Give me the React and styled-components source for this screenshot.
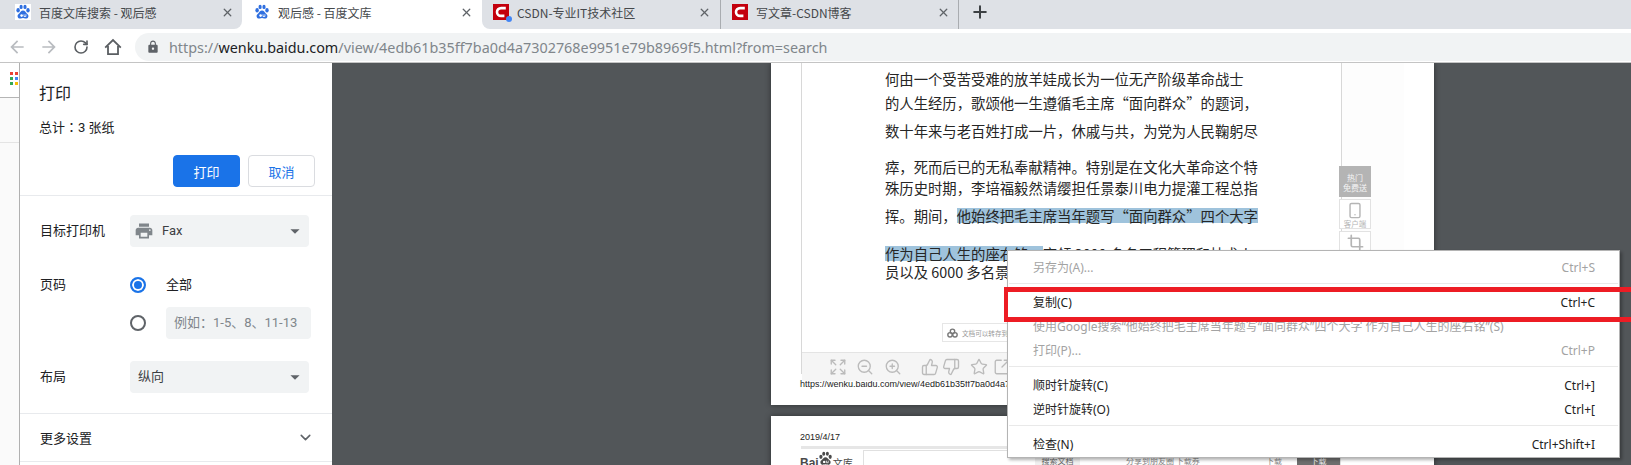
import styled, { createGlobalStyle } from "styled-components"
import { ChevronDown, Crop, Expand, Plus, RotateCw, Smartphone, SquareArrowOutUpRight, Star, ThumbsDown, ThumbsUp, X, ZoomIn, ZoomOut } from "lucide-react"
import { MdArrowBack, MdArrowForward, MdArrowDropDown, MdLock, MdPrint } from "react-icons/md"

const SANS = `Roboto, "Noto Sans CJK SC", sans-serif`
const UI = `"Noto Sans", "Noto Sans CJK SC", sans-serif`
const DOC = `"Noto Sans CJK SC", sans-serif`

const GlobalStyle = createGlobalStyle`
  html, body { margin: 0; padding: 0; background: #fff; }
  * { box-sizing: border-box; }
`

const tabs = [
  { title: "百度文库搜索 - 观后感", icon: "baidu", width: 242, pad: 15, closePad: 8, tile: true },
  { title: "观后感 - 百度文库", icon: "baidu", width: 240, pad: 12, closePad: 9, active: true },
  { title: "CSDN-专业IT技术社区", icon: "csdn", width: 239, pad: 11, closePad: 9, dot: true, divider: true },
  { title: "写文章-CSDN博客", icon: "csdn", width: 238, pad: 11, closePad: 8, divider: true },
]

const lines = [
  { top: 7, text: "何由一个受苦受难的放羊娃成长为一位无产阶级革命战士" },
  { top: 6, text: "的人生经历，歌颂他一生遵循毛主席“面向群众”的题词，" },
  { top: 10, text: "数十年来与老百姓打成一片，休戚与共，为党为人民鞠躬尽" },
  { top: 18, text: "瘁，死而后已的无私奉献精神。特别是在文化大革命这个特" },
  { top: 3, text: "殊历史时期，李培福毅然请缨担任景泰川电力提灌工程总指" },
  { top: 10, text: "挥。期间，", marked: "他始终把毛主席当年题写“面向群众”四个大字" },
  { top: 20, marked: "作为自己人生的座右铭，", text: "率领 3000 多名工程管理和技术人" },
  { top: 0, text: "员以及 6000 多名景泰川工程建设者" },
]

const pageTools = [
  { Icon: Expand, gap: 27 },
  { Icon: ZoomOut, gap: 9 },
  { Icon: ZoomIn, gap: 10 },
  { Icon: ThumbsUp, gap: 19 },
  { Icon: ThumbsDown, gap: 3 },
  { Icon: Star, gap: 10 },
  { Icon: SquareArrowOutUpRight, gap: 5 },
]

const menu = [
  [{ label: "另存为(A)...", keys: "Ctrl+S", off: true }],
  [
    { label: "复制(C)", keys: "Ctrl+C" },
    { label: "使用Google搜索“他始终把毛主席当年题写“面向群众”四个大字 作为自己人生的座右铭”(S)", off: true },
    { label: "打印(P)...", keys: "Ctrl+P", off: true },
  ],
  [
    { label: "顺时针旋转(C)", keys: "Ctrl+]" },
    { label: "逆时针旋转(O)", keys: "Ctrl+[" },
  ],
  [{ label: "检查(N)", keys: "Ctrl+Shift+I" }],
]

const BaiduPaw = ({ size = 16, color = "#2f6fe0" }) => (
  <svg width={size} height={size} viewBox="0 0 16 16">
    <ellipse cx="3.1" cy="6.2" rx="1.7" ry="2.2" fill={color} />
    <ellipse cx="6.1" cy="2.9" rx="1.6" ry="2.2" fill={color} />
    <ellipse cx="10" cy="2.9" rx="1.6" ry="2.2" fill={color} />
    <ellipse cx="13" cy="6.2" rx="1.7" ry="2.2" fill={color} />
    <path d="M8 6.6c2 0 2.6 1.8 3.8 2.8 1.3 1 1.8 1.9 1.6 3-.3 1.7-1.7 2.3-3.1 2.1-1-.1-1.6-.4-2.3-.4s-1.3.3-2.3.4c-1.4.2-2.8-.4-3.1-2.1-.2-1.1.3-2 1.6-3C5.4 8.4 6 6.6 8 6.6z" fill={color} />
    <circle cx="6.6" cy="11.6" r="1.3" fill="#fff" />
    <path d="M9 10.3v2.2h1.9v-2.2" fill="none" stroke="#fff" strokeWidth="0.8" />
  </svg>
)

const CsdnIcon = ({ size = 16 }) => (
  <svg width={size} height={size} viewBox="0 0 16 16">
    <rect width="16" height="16" fill="#c3000d" />
    <path d="M12.8 4.1H8.2C5.6 4.1 4 5.9 4 8s1.6 3.9 4.2 3.9h3.2" fill="none" stroke="#fff" strokeWidth="2.6" />
  </svg>
)

const HomeIcon = () => (
  <svg width="18" height="18" viewBox="0 0 18 18" fill="none" stroke="currentColor" strokeWidth="1.8">
    <path d="M1.2 9.6 9 2l7.8 7.6" />
    <path d="M4 8v8.2h10V8" />
  </svg>
)

const TriIcons = () => (
  <svg width="11" height="10" viewBox="0 0 16 14" fill="none" stroke="#777" strokeWidth="2">
    <circle cx="8" cy="4.6" r="3.2" />
    <circle cx="4.4" cy="9.6" r="3.2" />
    <circle cx="11.6" cy="9.6" r="3.2" />
  </svg>
)

const Root = styled.div`
  position: relative;
  width: 1631px;
  height: 465px;
  overflow: hidden;
  display: flex;
  flex-direction: column;
  background: #fff;
  font-family: ${SANS};
`

const TabStrip = styled.div`
  display: flex;
  height: 29px;
  flex: none;
  background: #fff;
`

const Tab = styled.div`
  position: relative;
  display: flex;
  align-items: center;
  flex: none;
  width: ${(p) => p.$width}px;
  padding: 0 ${(p) => p.$closePad}px 5px ${(p) => p.$pad}px;
  background: ${(p) => (p.$active ? "#fff" : "#dee1e6")};
  color: #45484b;
  font: 12px ${DOC};
  border-bottom-right-radius: ${(p) => (p.$roundRight ? "8px" : "0")};
  border-bottom-left-radius: ${(p) => (p.$roundLeft ? "8px" : "0")};
  border-right: ${(p) => (p.$divider ? "1px solid #a9acb0" : "0")};
`

const TabIcon = styled.span`
  position: relative;
  display: flex;
  flex: none;
  width: 16px;
  height: 16px;
  margin-right: 8px;
  background: ${(p) => (p.$tile ? "#fff" : "transparent")};
`

const TabDot = styled.span`
  position: absolute;
  right: -3px;
  bottom: -2px;
  width: 6px;
  height: 6px;
  border-radius: 50%;
  background: #4285f4;
`

const TabTitle = styled.span`
  flex: 1;
  white-space: nowrap;
`

const TabFill = styled.div`
  flex: 1;
  display: flex;
  align-items: center;
  padding: 0 0 5px 11px;
  background: #dee1e6;
  color: #3c4043;
`

const Toolbar = styled.div`
  display: flex;
  flex: none;
  height: 34px;
  padding: 4px 0 0 1px;
  background: #fff;
  border-bottom: 1px solid #c4c4c4;
`

const NavButton = styled.div`
  display: flex;
  align-items: center;
  justify-content: center;
  width: 32px;
  height: 28px;
  color: ${(p) => (p.$dim ? "#b9bcc0" : "#5a5e62")};
`

const Omnibox = styled.div`
  display: flex;
  align-items: center;
  flex: 1;
  height: 28px;
  margin-left: 6px;
  padding-left: 11px;
  background: #f1f3f4;
  border-radius: 14px 0 0 14px;
  color: #5f6368;
`

const Url = styled.span`
  margin-left: 9px;
  font: 14.37px "Noto Sans", sans-serif;
  color: #80868b;
  white-space: nowrap;

  b {
    font-weight: 400;
    color: #202124;
  }
`

const Viewport = styled.div`
  display: flex;
  flex: 1;
  min-height: 0;
`

const LeftStrip = styled.div`
  flex: none;
  width: 19px;
  background: #fafafa;
`

const AppsBar = styled.div`
  height: 35px;
  padding: 9px 0 0 10px;
  background: #fff;
  border-bottom: 1px solid #b5b5b5;
`

const AppsGrid = styled.div`
  display: grid;
  grid-template-columns: 3px 3px;
  grid-auto-rows: 3px;
  gap: 2px;
`

const AppsDot = styled.span`
  background: ${(p) => p.$color};
`

const BookmarkRow = styled.div`
  height: 45px;
  border-bottom: 1px solid #e4e4e4;
`

const PrintPanel = styled.aside`
  flex: none;
  width: 313px;
  background: #fff;
  border-left: 1px solid #b0b0b0;
  color: #202124;
  font: 13px ${SANS};
`

const PanelHead = styled.header`
  height: 133px;
  padding: 21px 17px 0 19px;
  border-bottom: 1px solid #e8eaed;
`

const PanelTitle = styled.div`
  font-size: 16px;
  line-height: 20px;
`

const Summary = styled.div`
  margin-top: 15px;
  line-height: 18px;
  font-family: Roboto, "Noto Sans CJK TC", sans-serif;
`

const ButtonRow = styled.div`
  display: flex;
  justify-content: flex-end;
  gap: 8px;
  margin-top: 18px;
`

const PanelButton = styled.div`
  display: flex;
  align-items: center;
  justify-content: center;
  width: 67px;
  height: 32px;
  border-radius: 4px;
  border: 1px solid ${(p) => (p.$primary ? "#1a73e8" : "#dadce0")};
  background: ${(p) => (p.$primary ? "#1a73e8" : "#fff")};
  color: ${(p) => (p.$primary ? "#fff" : "#1a73e8")};
`

const PanelBody = styled.div`
  padding: 19px 0 20px 20px;
  line-height: 16px;
  border-bottom: 1px solid #e8eaed;
`

const Field = styled.div`
  display: grid;
  grid-template-columns: 90px 1fr;
  align-items: ${(p) => (p.$top ? "start" : "center")};
  margin-top: ${(p) => p.$gap || 0}px;
`

const Select = styled.div`
  display: flex;
  align-items: center;
  width: 179px;
  height: 32px;
  padding: 0 3px 0 ${(p) => (p.$icon ? 4 : 8)}px;
  border-radius: 4px;
  background: #f1f3f4;
  color: #3c4043;

  span {
    flex: 1;
  }
`

const PrinterIcon = styled(MdPrint)`
  margin-right: 8px;
  color: #80868b;
`

const RadioLine = styled.div`
  display: flex;
  align-items: center;
  gap: 20px;
  margin-top: ${(p) => p.$gap || 0}px;
`

const Radio = styled.span`
  flex: none;
  width: 16px;
  height: 16px;
  border-radius: 50%;
  border: 2px solid ${(p) => (p.$on ? "#1a73e8" : "#5f6368")};
  background: ${(p) => (p.$on ? "#1a73e8" : "#fff")};
  box-shadow: ${(p) => (p.$on ? "inset 0 0 0 2px #fff" : "none")};
`

const RangeInput = styled.div`
  display: flex;
  align-items: center;
  width: 145px;
  height: 32px;
  padding-left: 8px;
  border-radius: 4px;
  background: #f1f3f4;
  color: #80868b;
  white-space: nowrap;
`

const MoreRow = styled.div`
  display: flex;
  align-items: center;
  justify-content: space-between;
  height: 48px;
  padding: 0 18px 0 20px;
  border-bottom: 1px solid #e8eaed;
  color: #202124;
`

const Preview = styled.main`
  flex: 1;
  min-width: 0;
  overflow: hidden;
  padding-left: 439px;
  background: #525659;
`

const Sheet = styled.section`
  width: 663px;
  background: #fff;
  box-shadow: 0 0 6px rgba(0, 0, 0, 0.45);
`

const FirstSheet = styled(Sheet)`
  height: 342px;
  padding-left: 30px;
`

const SecondSheet = styled(Sheet)`
  height: 60px;
  margin-top: 11px;
  padding: 15px 0 0 29px;
`

const Frame = styled.div`
  display: flex;
  height: 311px;
  border-left: 1px solid #d8d8d8;
`

const DocColumn = styled.div`
  position: relative;
  flex: none;
  width: 539px;
`

const Article = styled.div`
  height: 282px;
  padding-left: 83px;
  font: 14.35px ${DOC};
  color: #262626;
`

const Line = styled.div`
  height: 18px;
  line-height: 18px;
  margin-top: ${(p) => p.$top}px;
  white-space: nowrap;
`

const Marked = styled.span`
  display: inline-block;
  line-height: 15px;
  background: #9fc3dc;
`

const PageTools = styled.div`
  display: flex;
  align-items: center;
  height: 29px;
  background: #f5f5f5;
  border-top: 1px solid #e4e4e4;
  color: #bbb;
`

const ToolIcon = styled.span`
  display: flex;
  margin-left: ${(p) => p.$gap}px;
`

const SaveTip = styled.div`
  position: absolute;
  left: 140px;
  top: 260px;
  display: flex;
  align-items: center;
  gap: 4px;
  width: 170px;
  height: 19px;
  padding-left: 4px;
  background: #fff;
  border: 1px solid #e6e6e6;
  font: 6.6px ${DOC};
  color: #999;
`

const Rail = styled.div`
  display: flex;
  flex-direction: column;
  gap: 2px;
  flex: none;
  width: 63px;
  padding-top: 103px;
  background: #fdfdfd;
  border-left: 1px solid #d8d8d8;
`

const RailHot = styled.div`
  width: 32px;
  height: 31px;
  margin-left: -3px;
  padding-top: 7px;
  background: #b4b4b4;
  color: #f4f4f4;
  font: 8px/10px ${DOC};
  text-align: center;
`

const RailButton = styled.div`
  display: flex;
  flex-direction: column;
  align-items: center;
  width: 32px;
  height: 30px;
  margin-left: -3px;
  padding-top: 2px;
  background: #fff;
  border: 1px solid #e2e2e2;
  color: #b5b5b5;
  font: 7.5px/9px ${DOC};
`

const PrintedLine = styled.div`
  padding-left: 29px;
  margin-left: -30px;
  margin-top: 3px;
  font: 9px/14px "Liberation Sans", sans-serif;
  color: #222;
  white-space: nowrap;
`

const PrintedDate = styled.div`
  font: 9px/12px "Liberation Sans", sans-serif;
  color: #222;
`

const PrintedRule = styled.div`
  width: 540px;
  height: 3px;
  margin: 3px 0 1px 1px;
  background: #e6e6e6;
`

const PrintedHead = styled.div`
  display: flex;
`

const Logo = styled.div`
  display: flex;
  align-items: flex-start;
  flex: none;
  width: 63px;
  padding-top: 6px;
  font: 700 12px/14px "Liberation Sans", sans-serif;
  color: #4a4a4a;

  small {
    font: 10px/14px ${DOC};
  }
`

const LogoPaw = styled.span`
  display: flex;
  margin: -5px 0 0 -1px;
`

const SearchBox = styled.div`
  display: flex;
  align-items: flex-start;
  flex: none;
  width: 478px;
  height: 30px;
  padding: 4px 0 0 171px;
  border: 1px solid #e0e0e0;
  font: 8px/12px ${DOC};
  color: #888;
`

const SearchChip = styled.span`
  flex: none;
  width: ${(p) => p.$width}px;
  margin-left: ${(p) => p.$gap}px;
  background: ${(p) => p.$bg || "transparent"};
  color: ${(p) => p.$color || "#888"};
  text-align: ${(p) => (p.$bg ? "center" : "left")};
  white-space: nowrap;
`

const ContextMenu = styled.div`
  position: absolute;
  left: 1007px;
  top: 250px;
  width: 613px;
  height: 208px;
  padding: 4px 1px 1px;
  background: #fff;
  border: 1px solid #b4b4b4;
  box-shadow: 2px 2px 3px rgba(0, 0, 0, 0.3);
  font: 12px ${UI};
`

const MenuGroup = styled.div`
  & + & {
    margin-top: 4px;
    padding-top: 6px;
    border-top: 1px solid #e9e9e9;
  }
`

const MenuItem = styled.div`
  display: flex;
  justify-content: space-between;
  align-items: center;
  height: 24px;
  padding: 0 23px 0 24px;
  color: ${(p) => (p.$off ? "#a3a3a3" : "#222")};
  white-space: nowrap;
`

const RedMark = styled.div`
  position: absolute;
  left: 1004px;
  top: 287px;
  width: 640px;
  height: 35px;
  border: 5px solid #ed1c24;
  border-left-width: 4px;
  pointer-events: none;
`

const appsColors = ["#ea4335", "#ea4335", "#34a853", "#4285f4", "#34a853", "#fbbc05"]

const App = () => {
  return (
    <Root>
      <GlobalStyle />
      <TabStrip>
        {tabs.map((tab, i) => (
          <Tab
            key={tab.title}
            $width={tab.width}
            $pad={tab.pad}
            $closePad={tab.closePad}
            $active={tab.active}
            $divider={tab.divider}
            $roundRight={i === 0}
            $roundLeft={i === 2}
          >
            <TabIcon $tile={tab.tile}>
              {tab.icon === "baidu" ? <BaiduPaw /> : <CsdnIcon />}
              {tab.dot && <TabDot />}
            </TabIcon>
            <TabTitle>{tab.title}</TabTitle>
            <X size={13} strokeWidth={2.4} color="#5f6368" />
          </Tab>
        ))}
        <TabFill>
          <Plus size={20} strokeWidth={2.4} />
        </TabFill>
      </TabStrip>

      <Toolbar>
        <NavButton $dim><MdArrowBack size={20} /></NavButton>
        <NavButton $dim><MdArrowForward size={20} /></NavButton>
        <NavButton><RotateCw size={16} strokeWidth={2.4} /></NavButton>
        <NavButton><HomeIcon /></NavButton>
        <Omnibox>
          <MdLock size={14} />
          <Url>https://<b>wenku.baidu.com</b>/view/4edb61b35ff7ba0d4a7302768e9951e79b8969f5.html?from=search</Url>
        </Omnibox>
      </Toolbar>

      <Viewport>
        <LeftStrip>
          <AppsBar>
            <AppsGrid>
              {appsColors.map((color, i) => <AppsDot key={i} $color={color} />)}
            </AppsGrid>
          </AppsBar>
          <BookmarkRow />
        </LeftStrip>

        <PrintPanel>
          <PanelHead>
            <PanelTitle>打印</PanelTitle>
            <Summary>总计：3 张纸</Summary>
            <ButtonRow>
              <PanelButton $primary>打印</PanelButton>
              <PanelButton>取消</PanelButton>
            </ButtonRow>
          </PanelHead>

          <PanelBody>
            <Field>
              <div>目标打印机</div>
              <Select $icon>
                <PrinterIcon size={20} />
                <span>Fax</span>
                <MdArrowDropDown size={22} color="#5f6368" />
              </Select>
            </Field>
            <Field $top $gap={30}>
              <div>页码</div>
              <div>
                <RadioLine>
                  <Radio $on />
                  <span>全部</span>
                </RadioLine>
                <RadioLine $gap={14}>
                  <Radio />
                  <RangeInput>例如：1-5、8、11-13</RangeInput>
                </RadioLine>
              </div>
            </Field>
            <Field $gap={22}>
              <div>布局</div>
              <Select>
                <span>纵向</span>
                <MdArrowDropDown size={22} color="#5f6368" />
              </Select>
            </Field>
          </PanelBody>

          <MoreRow>
            <span>更多设置</span>
            <ChevronDown size={17} strokeWidth={2.2} color="#5f6368" />
          </MoreRow>
        </PrintPanel>

        <Preview>
          <FirstSheet>
            <Frame>
              <DocColumn>
                <Article>
                  {lines.map((line) => (
                    <Line key={line.top + (line.text || "")} $top={line.top}>
                      {line.top === 20 && <Marked>{line.marked}</Marked>}
                      {line.text}
                      {line.top !== 20 && line.marked && <Marked>{line.marked}</Marked>}
                    </Line>
                  ))}
                </Article>
                <SaveTip><TriIcons />文档可以转存到网盘</SaveTip>
                <PageTools>
                  {pageTools.map(({ Icon, gap }, i) => (
                    <ToolIcon key={i} $gap={gap}><Icon size={18} strokeWidth={1.8} /></ToolIcon>
                  ))}
                </PageTools>
              </DocColumn>
              <Rail>
                <RailHot>热门<br />免费送</RailHot>
                <RailButton><Smartphone size={18} strokeWidth={2} />客户端</RailButton>
                <RailButton><Crop size={17} strokeWidth={2.4} />截图</RailButton>
              </Rail>
            </Frame>
            <PrintedLine>https://wenku.baidu.com/view/4edb61b35ff7ba0d4a7302768e9951e79b8969f5.html?from=search</PrintedLine>
          </FirstSheet>

          <SecondSheet>
            <PrintedDate>2019/4/17</PrintedDate>
            <PrintedRule />
            <PrintedHead>
              <Logo>
                Bai<LogoPaw><BaiduPaw size={15} color="#4a4a4a" /></LogoPaw><small>文库</small>
              </Logo>
              <SearchBox>
                <SearchChip $width={45} $gap={0} $bg="#f0f0f0" $color="#666">搜索文档</SearchChip>
                <SearchChip $width={100} $gap={46}>分享到朋友圈 下载券</SearchChip>
                <SearchChip $width={30} $gap={40}>下载</SearchChip>
                <SearchChip $width={43} $gap={1} $bg="#6e6e6e" $color="#eee">下载</SearchChip>
              </SearchBox>
            </PrintedHead>
          </SecondSheet>
        </Preview>
      </Viewport>

      <ContextMenu>
        {menu.map((group, i) => (
          <MenuGroup key={i}>
            {group.map((item) => (
              <MenuItem key={item.label} $off={item.off}>
                <span>{item.label}</span>
                {item.keys && <span>{item.keys}</span>}
              </MenuItem>
            ))}
          </MenuGroup>
        ))}
      </ContextMenu>
      <RedMark />
    </Root>
  )
}

export default App
